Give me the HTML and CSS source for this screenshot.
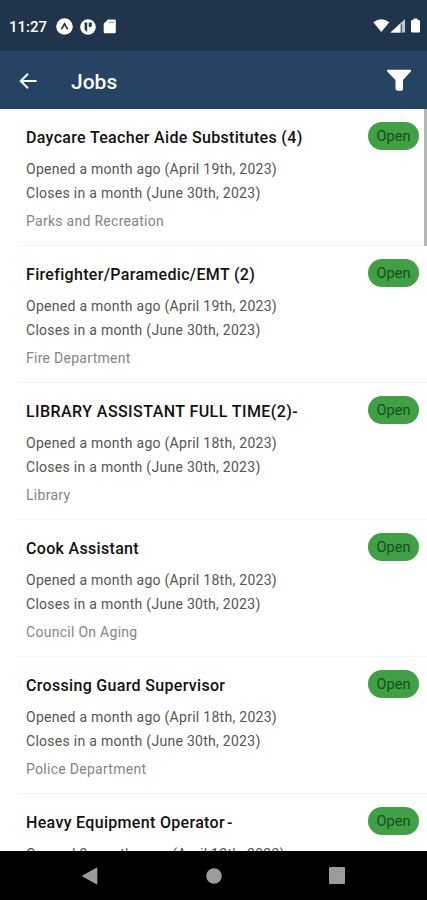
FILE: index.html
```html
<!DOCTYPE html>
<html lang="en">
    <head>
        <meta charset="UTF-8" />
        <meta name="viewport" content="width=device-width, initial-scale=1.0" />
        <title>Jobs</title>
        <link rel="stylesheet" href="styles.css">
    </head>
    <body>
        <div class="screen">
            <div class="status-bar">
                <span class="time">11:27</span>
                <svg class="status-icon" width="17" height="17" viewBox="0 0 17 17">
                    <circle cx="8.5" cy="8.5" r="8.3" fill="#fff" />
                    <path d="M5.2 11.2C6.8 9.8 7.4 7.2 8.5 5.7C9.6 7.2 10.2 9.8 11.8 11.2" fill="none" stroke="#20354c" stroke-width="1.7" />
                </svg>
                <svg class="status-icon" width="16" height="16" viewBox="0 0 16 16">
                    <circle cx="8" cy="8" r="7.8" fill="#fff" />
                    <path d="M4.6 3.5H7.2V12.8C5.6 12.4 4.6 11 4.6 9.5Z" fill="#20354c" />
                    <path d="M8.8 3.6H11.8V6.5Q11.8 8 8.8 8Z" fill="#20354c" />
                </svg>
                <svg class="status-icon" width="13" height="15" viewBox="0 0 13 15">
                    <path d="M4.9 0.5H11.5Q12.8 0.5 12.8 1.8V13Q12.8 14.3 11.5 14.3H2Q0.7 14.3 0.7 13V4.7Z" fill="#fff" />
                    <path d="M5.5 3.4H11" stroke="#a9b3bd" stroke-width="1.6" />
                </svg>
                <svg class="signal" width="50" height="17" viewBox="0 0 50 17">
                    <path d="M0.3 4.3Q8.3 -1.8 16.3 4.3L8.3 14Z" fill="#fff" />
                    <path d="M32 1V14.5H17.5Z" fill="#c3c9cf" />
                    <path d="M27 6V14.5H17.5Z" fill="#fff" />
                    <path d="M28.5 6.5V14.5" stroke="#536477" stroke-width="1.4" />
                    <path d="M40.5 0.5H44.5V2H46Q47 2 47 3V13.5Q47 14.5 46 14.5H39Q38 14.5 38 13.5V3Q38 2 39 2H40.5Z" fill="#fff" />
                </svg>
            </div>
            <div class="header">
                <svg class="back" width="18" height="18" viewBox="0 0 18 18">
                    <path d="M17.6 9H2M9 1.7L1.7 9L9 16.3" fill="none" stroke="#fff" stroke-width="2" />
                </svg>
                <h1>Jobs</h1>
                <svg class="filter" width="26" height="23" viewBox="0 0 26 23">
                    <path d="M1.8 0.7H24.2Q25.8 0.9 24.8 2.4L17 11V20Q16.8 21.5 15.5 21.8H11.5Q9.5 21.5 9.5 19.5V11L1.2 2.4Q0.2 0.9 1.8 0.7Z" fill="#fff" />
                </svg>
            </div>
            <div class="jobs">
                <div class="job">
                    <h2>Daycare Teacher Aide Substitutes (4)</h2>
                    <p>Opened a month ago (April 19th, 2023)</p>
                    <p>Closes in a month (June 30th, 2023)</p>
                    <p class="department">Parks and Recreation</p>
                    <span class="badge">Open</span>
                </div>
                <div class="job">
                    <h2>Firefighter/Paramedic/EMT (2)</h2>
                    <p>Opened a month ago (April 19th, 2023)</p>
                    <p>Closes in a month (June 30th, 2023)</p>
                    <p class="department">Fire Department</p>
                    <span class="badge">Open</span>
                </div>
                <div class="job">
                    <h2 class="caps">LIBRARY ASSISTANT FULL TIME(2)-</h2>
                    <p>Opened a month ago (April 18th, 2023)</p>
                    <p>Closes in a month (June 30th, 2023)</p>
                    <p class="department">Library</p>
                    <span class="badge">Open</span>
                </div>
                <div class="job">
                    <h2>Cook Assistant</h2>
                    <p>Opened a month ago (April 18th, 2023)</p>
                    <p>Closes in a month (June 30th, 2023)</p>
                    <p class="department">Council On Aging</p>
                    <span class="badge">Open</span>
                </div>
                <div class="job">
                    <h2>Crossing Guard Supervisor</h2>
                    <p>Opened a month ago (April 18th, 2023)</p>
                    <p>Closes in a month (June 30th, 2023)</p>
                    <p class="department">Police Department</p>
                    <span class="badge">Open</span>
                </div>
                <div class="job">
                    <h2>Heavy Equipment Operator<span class="dash">-</span></h2>
                    <p>Opened 2 months ago (April 12th, 2023)</p>
                    <span class="badge">Open</span>
                </div>
                <div class="scrollbar"></div>
            </div>
            <div class="nav-bar">
                <svg width="16" height="18" viewBox="0 0 16 18">
                    <path d="M-0.5 9L15.3 0.3V17.7Z" fill="#9b9b9b" />
                </svg>
                <svg width="16" height="16" viewBox="0 0 16 16">
                    <circle cx="8" cy="8" r="7.8" fill="#9b9b9b" />
                </svg>
                <svg width="16" height="17" viewBox="0 0 16 17">
                    <rect width="16" height="17" rx="1" fill="#9b9b9b" />
                </svg>
            </div>
        </div>
    </body>
</html>
```
FILE: styles.css
```css
body {
    font-family: Roboto, sans-serif;
    margin: 0;
    background-color: #fff;
}
.screen {
    display: flex;
    flex-direction: column;
    height: 900px;
    overflow: hidden;
}
.status-bar {
    display: flex;
    align-items: center;
    flex: none;
    box-sizing: border-box;
    height: 51px;
    padding: 2px 7px 0 9px;
    background-color: #20354c;
    color: #fff;
}
.time {
    width: 47px;
    font-size: 15px;
    font-weight: 500;
}
.status-icon {
    margin-right: 7px;
}
.signal {
    margin-left: auto;
    margin-right: -3px;
}
.header {
    display: flex;
    align-items: center;
    flex: none;
    box-sizing: border-box;
    height: 58px;
    padding: 0 15px 0 19px;
    background-color: #254362;
    color: #fff;
}
.back {
    margin-top: 1px;
}
h1 {
    margin: 3px 0 0 34px;
    font-size: 21px;
    font-weight: 500;
}
.filter {
    margin-left: auto;
}
.jobs {
    position: relative;
    flex: 1;
    min-height: 0;
    overflow: hidden;
}
.job {
    position: relative;
    box-sizing: border-box;
    height: 137px;
    margin-left: 17px;
    padding: 17px 8px 0 9px;
    border-bottom: 1px solid #f4f4f4;
}
h2 {
    margin: 0 0 7px;
    font-size: 16px;
    font-weight: 500;
    line-height: 24px;
    letter-spacing: 0.32px;
    color: #111;
}
.caps {
    letter-spacing: 0.43px;
}
.dash {
    margin-left: 2px;
}
p {
    margin: 0;
    font-size: 14px;
    line-height: 24px;
    letter-spacing: 0.28px;
    color: #555;
}
.department {
    margin-top: 4px;
    color: #858585;
}
.badge {
    position: absolute;
    top: 13px;
    right: 8px;
    box-sizing: border-box;
    width: 51px;
    height: 28px;
    padding-top: 1px;
    border-radius: 14px;
    background-color: #3fa044;
    font-size: 14.5px;
    line-height: 28px;
    text-align: center;
    color: #174d20;
}
.scrollbar {
    position: absolute;
    top: 0;
    right: 0;
    width: 3px;
    height: 137px;
    background-color: #b5b5b5;
}
.nav-bar {
    display: flex;
    align-items: center;
    justify-content: space-between;
    flex: none;
    height: 49px;
    padding: 0 82px;
    background-color: #000;
}
```
